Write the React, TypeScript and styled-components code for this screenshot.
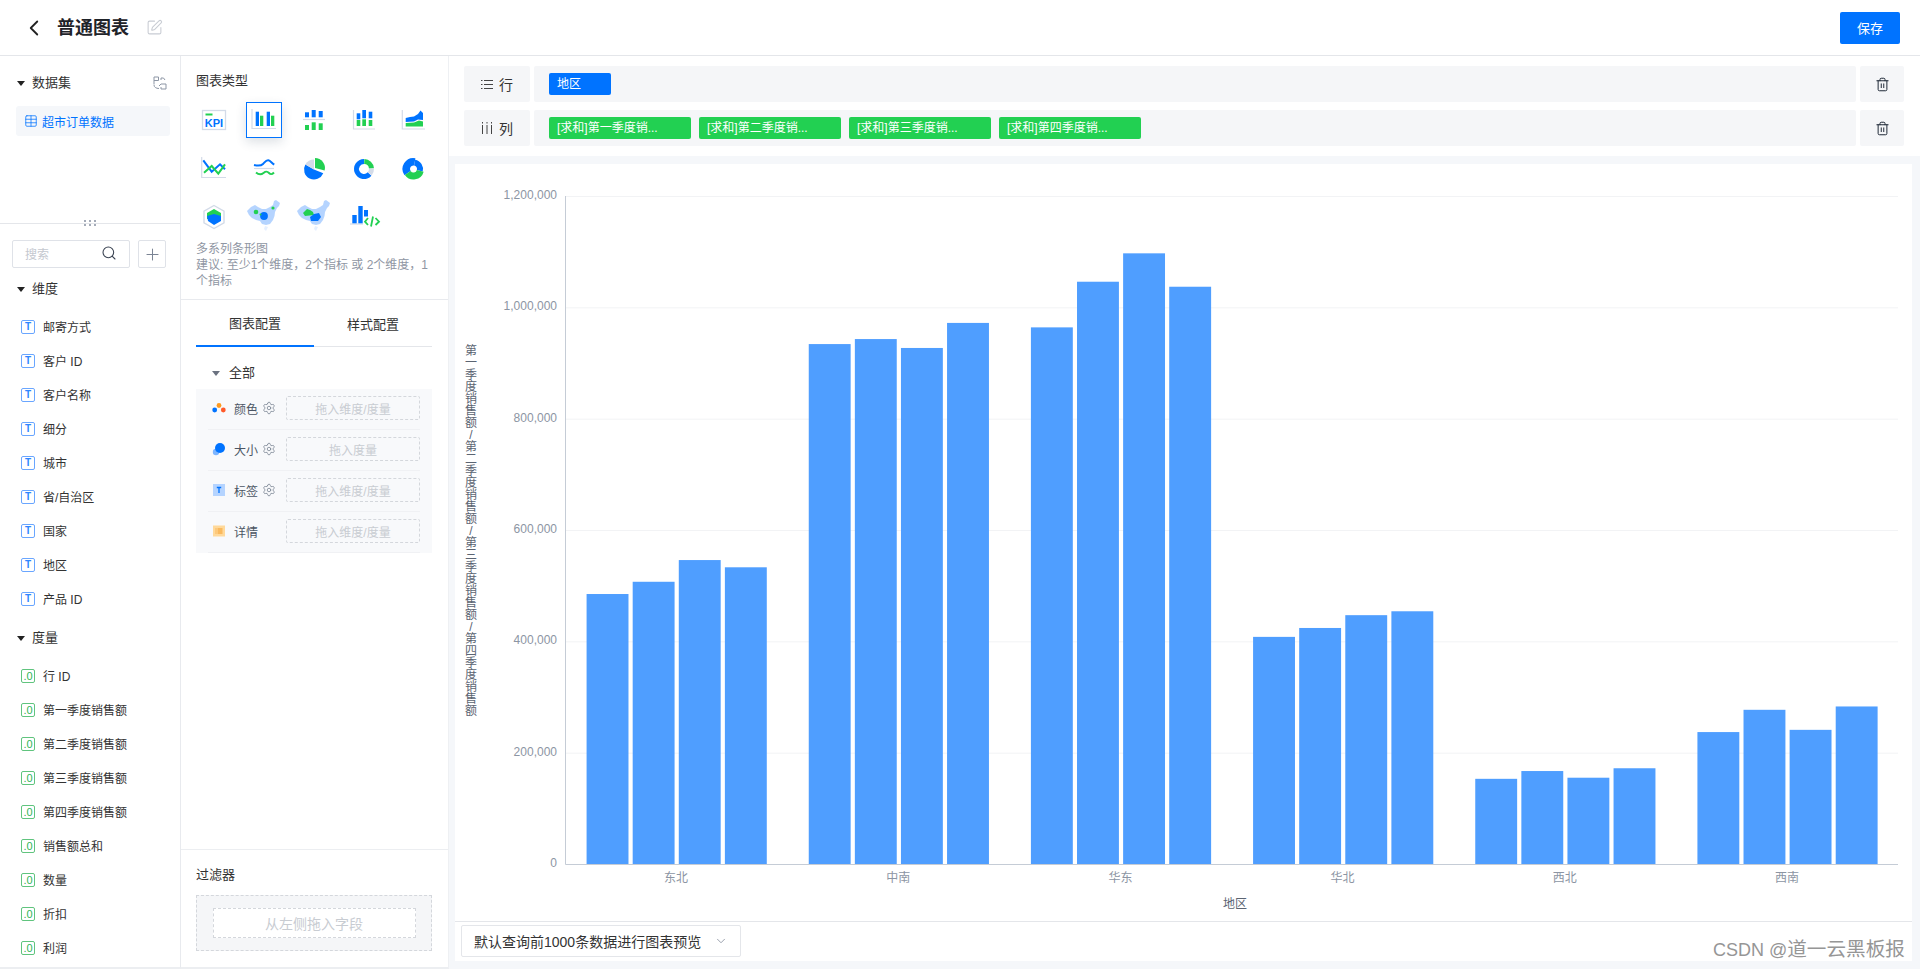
import React from "react";
import styled, { createGlobalStyle } from "styled-components";
import { ChevronDown, ChevronLeft, Plus, Search, Settings, SquarePen, Table, Trash2 } from "lucide-react";

const FONT = `"Liberation Sans", "Noto Sans CJK SC", sans-serif`;
const BLUE = "#0073ff";
const GREEN = "#22d052";
const LINE = "#d3dbe8";

const Global = createGlobalStyle`
  html, body { margin: 0; height: 100%; overflow: hidden; background: #fff; }
  body { font-family: ${FONT}; color: #333; }
  * { box-sizing: border-box; }
`;

const Page = styled.div`
  position: relative;
  width: 1920px;
  height: 969px;
  display: flex;
  flex-direction: column;
  overflow: hidden;
`;
const Header = styled.header`
  height: 56px;
  flex: none;
  display: flex;
  align-items: center;
  padding: 0 20px 0 21px;
  border-bottom: 1px solid #e4e6ea;
`;
const BackIcon = styled(ChevronLeft)`
  color: #222;
  margin-right: 10px;
`;
const Title = styled.h1`
  margin: 1px 17px 0 0;
  font-size: 18px;
  line-height: 24px;
  font-weight: 700;
  color: #1f2329;
`;
const EditIcon = styled(SquarePen)`
  color: #c8ccd3;
`;
const SaveButton = styled.button`
  margin-left: auto;
  width: 60px;
  height: 32px;
  border: 0;
  border-radius: 2px;
  background: ${BLUE};
  color: #fff;
  font: 13px ${FONT};
`;
const Body = styled.div`
  flex: 1;
  min-height: 0;
  display: flex;
`;
const LeftPanel = styled.aside`
  width: 181px;
  flex: none;
  display: flex;
  flex-direction: column;
  border-right: 1px solid #e8eaee;
  border-bottom: 2px solid #eceef1;
`;
const DatasetArea = styled.section`
  height: 168px;
  flex: none;
  padding: 19px 10px 0 17px;
  border-bottom: 1px solid #e4e6ea;
  position: relative;
`;
const Section = styled.div`
  display: flex;
  align-items: center;
  height: 16px;
  font-size: 13px;
  line-height: 16px;
  color: #333;
`;
const Caret = styled.i<{ $gray?: boolean }>`
  width: 0;
  height: 0;
  flex: none;
  margin-right: 7px;
  border-style: solid;
  border-width: 5px 4px 0;
  border-color: ${(p) => (p.$gray ? "#6b7280" : "#222")} transparent transparent;
`;
const SwapIcon = styled.svg`
  margin-left: auto;
  margin-right: 3px;
  width: 14px;
  height: 14px;
`;
const DatasetItem = styled.div`
  margin: 15px 0 0 -1px;
  height: 30px;
  border-radius: 3px;
  background: #f5f7fa;
  color: ${BLUE};
  font-size: 12px;
  display: flex;
  align-items: center;
  gap: 4px;
  padding-left: 8px;
`;
const Grip = styled.div`
  position: absolute;
  left: 84px;
  bottom: -3px;
  width: 12px;
  display: grid;
  grid-template-columns: repeat(3, 2px);
  gap: 2px 3px;
  & > b {
    width: 2px;
    height: 2px;
    background: #a4abb8;
  }
`;
const FieldsArea = styled.div`
  flex: 1;
  padding: 16px 14px 0 17px;
`;
const SearchRow = styled.div`
  display: flex;
  gap: 8px;
  margin: 0 0 0 -5px;
`;
const SearchBox = styled.div`
  width: 118px;
  height: 28px;
  border: 1px solid #dfe2e8;
  border-radius: 2px;
  display: flex;
  align-items: center;
  justify-content: space-between;
  padding: 0 12px 2px 12px;
  font-size: 12px;
  color: #c4c8cf;
`;
const AddBox = styled.div`
  width: 28px;
  height: 28px;
  border: 1px solid #dfe2e8;
  border-radius: 2px;
  display: flex;
  align-items: center;
  justify-content: center;
  color: #7b8494;
`;
const FieldHead = styled(Section)<{ $top: number }>`
  margin-top: ${(p) => p.$top}px;
  margin-bottom: 13px;
`;
const FieldRow = styled.div`
  height: 34px;
  display: flex;
  align-items: center;
  gap: 8px;
  margin-left: 4px;
  font-size: 12px;
  color: #333;
  white-space: nowrap;
`;
const FieldName = styled.span`
  margin-top: -2px;
`;
const FieldBadge = styled.span<{ $kind: "t" | "n" }>`
  width: 14px;
  height: 14px;
  flex: none;
  border: 1px solid ${(p) => (p.$kind === "t" ? "#6aa6ff" : "#60c47e")};
  border-radius: 2px;
  display: flex;
  align-items: center;
  justify-content: center;
  color: ${(p) => (p.$kind === "t" ? "#2f86ff" : "#2fb55a")};
  font-size: ${(p) => (p.$kind === "t" ? "10px" : "11px")};
  font-weight: ${(p) => (p.$kind === "t" ? 700 : 400)};
  line-height: 12px;
`;
const MidPanel = styled.aside`
  width: 268px;
  flex: none;
  display: flex;
  flex-direction: column;
  border-right: 1px solid #eef0f3;
  border-bottom: 2px solid #eceef1;
`;
const TypesArea = styled.section`
  height: 244px;
  flex: none;
  padding: 17px 16px 0 15px;
  border-bottom: 1px solid #e8eaee;
`;
const PlainTitle = styled.div`
  font-size: 13px;
  line-height: 16px;
  color: #333;
`;
const TypeGrid = styled.div`
  margin: 7px 0 0 -7px;
  display: grid;
  grid-template-columns: repeat(5, 50px);
  grid-auto-rows: 48.5px;
`;
const TypeCell = styled.div<{ $active?: boolean }>`
  width: 36px;
  height: 36px;
  margin: 6px 0 0 0;
  justify-self: center;
  display: flex;
  align-items: center;
  justify-content: center;
  ${(p) => (p.$active ? `outline: 1px solid ${BLUE}; outline-offset: -1px; box-shadow: 0 4px 10px rgba(40, 60, 90, 0.16);` : "")}
  & > svg { overflow: visible; flex: none; }
`;
const Description = styled.p`
  margin: -1px 0 0;
  width: 236px;
  font-size: 12px;
  line-height: 16px;
  color: #8f96a3;
`;
const ConfigArea = styled.section`
  flex: 1;
  padding: 1px 16px 0 15px;
`;
const Tabs = styled.div`
  display: flex;
  height: 46px;
  border-bottom: 1px solid #e4e6ea;
`;
const Tab = styled.div<{ $active?: boolean }>`
  width: 118px;
  height: 46px;
  display: flex;
  align-items: center;
  justify-content: center;
  padding-bottom: 2px;
  font-size: 13px;
  color: #333;
  ${(p) => (p.$active ? `border-bottom: 2px solid ${BLUE};` : "")}
`;
const AllRow = styled(Section)`
  margin: 18px 0 8px;
  padding-left: 16px;
  gap: 2px;
`;
const Slots = styled.div`
  background: #f8f9fb;
  padding: 0 12px;
  height: 164px;
`;
const Slot = styled.div`
  height: 41px;
  display: flex;
  align-items: center;
  padding-bottom: 2px;
  border-bottom: 1px solid #f0f1f4;
  font-size: 12px;
  color: #4b5563;
`;
const SlotIcon = styled.svg`
  width: 14px;
  height: 14px;
  flex: none;
  margin-right: 8px;
  margin-left: 4px;
`;
const SlotLabel = styled.span`
  width: 28px;
  flex: none;
`;
const GearSpace = styled.span`
  width: 14px;
  flex: none;
  margin-right: 10px;
  display: flex;
  color: #7d8796;
`;
const DropHint = styled.div`
  width: 134px;
  height: 24px;
  border: 1px dashed #d4d7dc;
  border-radius: 2px;
  display: flex;
  align-items: center;
  justify-content: center;
  font-size: 12px;
  color: #c8ccd2;
`;
const FilterArea = styled.section`
  height: 118px;
  flex: none;
  padding: 17px 16px 0 15px;
  border-top: 1px solid #eceef1;
`;
const FilterBox = styled.div`
  margin-top: 12px;
  height: 56px;
  border: 1px dashed #d4d7dc;
  background: #f5f6f8;
  display: flex;
  align-items: center;
  justify-content: center;
`;
const FilterInner = styled.div`
  width: 203px;
  height: 30px;
  background: #fff;
  border: 1px dashed #d4d7dc;
  display: flex;
  align-items: center;
  justify-content: center;
  font-size: 14px;
  color: #c8ccd2;
`;
const Main = styled.main`
  flex: 1;
  min-width: 0;
  display: flex;
  flex-direction: column;
  background: #f5f7fa;
`;
const Shelf = styled.div`
  height: 100px;
  flex: none;
  background: #fff;
  padding: 10px 16px 0 15px;
  display: flex;
  flex-direction: column;
  gap: 8px;
`;
const ShelfRow = styled.div`
  height: 36px;
  display: flex;
  gap: 4px;
`;
const ShelfLabel = styled.div`
  width: 66px;
  flex: none;
  border-radius: 2px;
  background: #f5f6f8;
  display: flex;
  align-items: center;
  justify-content: center;
  gap: 6px;
  font-size: 14px;
  color: #333;
`;
const ShelfDrop = styled.div`
  flex: 1;
  border-radius: 2px;
  background: #f5f6f8;
  display: flex;
  align-items: center;
  gap: 8px;
  padding-left: 15px;
`;
const ShelfTrash = styled.div`
  width: 44px;
  flex: none;
  border-radius: 2px;
  background: #f5f6f8;
  display: flex;
  align-items: center;
  justify-content: center;
  color: #1f2937;
`;
const Chip = styled.div<{ $green?: boolean }>`
  height: 22px;
  width: ${(p) => (p.$green ? "142px" : "62px")};
  border-radius: 2px;
  padding-left: 8px;
  background: ${(p) => (p.$green ? GREEN : BLUE)};
  color: #fff;
  font-size: 12px;
  line-height: 22px;
  white-space: nowrap;
`;
const ChartCard = styled.section`
  flex: 1;
  min-height: 0;
  margin: 8px 8px 8px 6px;
  background: #fff;
  display: flex;
  flex-direction: column;
`;
const ChartSvg = styled.svg`
  display: block;
  width: 1457px;
  height: 757px;
  flex: none;
`;
const Footer = styled.div`
  flex: 1;
  border-top: 1px solid #e4e6ea;
  padding: 3px 0 0 6px;
`;
const PreviewSelect = styled.div`
  width: 280px;
  height: 32px;
  border: 1px solid #e4e6ea;
  border-radius: 2px;
  display: flex;
  align-items: center;
  justify-content: space-between;
  padding: 0 12px;
  font-size: 14px;
  color: #333;
`;
const Chevron = styled(ChevronDown)`
  color: #8b93a1;
`;
const Watermark = styled.div`
  position: absolute;
  left: 1713px;
  top: 936px;
  font-size: 18px;
  line-height: 26px;
  color: #969696;
  white-space: nowrap;
`;
const WatermarkCjk = styled.span`
  font-size: 19.6px;
`;

/* ---- chart-type drawings ---- */
const polar = (cx: number, cy: number, r: number, a: number) => {
  const t = ((a - 90) * Math.PI) / 180;
  return `${(cx + r * Math.cos(t)).toFixed(2)} ${(cy + r * Math.sin(t)).toFixed(2)}`;
};
const sector = (cx: number, cy: number, r: number, a0: number, a1: number, inner = 0) => {
  const large = a1 - a0 > 180 ? 1 : 0;
  if (!inner) return `M${cx} ${cy}L${polar(cx, cy, r, a0)}A${r} ${r} 0 ${large} 1 ${polar(cx, cy, r, a1)}Z`;
  return `M${polar(cx, cy, r, a0)}A${r} ${r} 0 ${large} 1 ${polar(cx, cy, r, a1)}L${polar(cx, cy, inner, a1)}A${inner} ${inner} 0 ${large} 0 ${polar(cx, cy, inner, a0)}Z`;
};
const CHINA = "M1 12L5 8L9 6L12 8L16 10L20 10L24 8L27 6L28 2L30 1L34 4L33 7L31 9L29 13L28.5 17L27 21L24 25L20 26L16 25L14 22L10 21L6 19L3 16Z";

const Glyph: React.FC<{ children: React.ReactNode }> = ({ children }) => (
  <svg width="36" height="36" viewBox="0 0 36 36">{children}</svg>
);
const Axes: React.FC<{ x?: number; y?: number; end?: number; top?: number }> = ({ x = 6, y = 26.5, end = 30, top = 7 }) => (
  <path d={`M${x} ${top}V${y}H${end}`} fill="none" stroke={LINE} strokeWidth="1.2" />
);

const typeIcons: React.ReactNode[] = [
  <Glyph key="kpi">
    <rect x="6.5" y="8.5" width="23" height="19" fill="none" stroke={LINE} strokeWidth="1.3" />
    <rect x="9.5" y="11.5" width="7" height="2" fill={GREEN} />
    <text x="18" y="25" textAnchor="middle" fontFamily={FONT} fontWeight="700" fontSize="11" fill={BLUE}>KPI</text>
  </Glyph>,
  <Glyph key="bars">
    <Axes />
    <rect x="9.7" y="9.7" width="3.3" height="14.3" fill={BLUE} />
    <rect x="14" y="13.7" width="3.3" height="10.3" fill={GREEN} />
    <rect x="20.7" y="9.7" width="3.3" height="14.3" fill={BLUE} />
    <rect x="25" y="13.7" width="3.3" height="10.3" fill={GREEN} />
  </Glyph>,
  <Glyph key="mirror">
    <rect x="9" y="10.3" width="4" height="5" fill={BLUE} />
    <rect x="15.7" y="8" width="4" height="7.3" fill={BLUE} />
    <rect x="22.7" y="9" width="4" height="6.3" fill={BLUE} />
    <path d="M7 17.5H29" stroke={LINE} strokeWidth="1.2" />
    <rect x="9" y="23" width="4" height="5" fill={GREEN} />
    <rect x="15.7" y="20.3" width="4" height="7.7" fill={GREEN} />
    <rect x="22.7" y="21.3" width="4" height="6.7" fill={GREEN} />
  </Glyph>,
  <Glyph key="stack">
    <Axes x={7.5} y={27} end={29} top={8} />
    <rect x="10.7" y="11.3" width="3.6" height="6" fill={BLUE} />
    <rect x="10.7" y="18" width="3.6" height="6" fill={GREEN} />
    <rect x="16.3" y="8" width="3.7" height="8.3" fill={BLUE} />
    <rect x="16.3" y="17.3" width="3.7" height="6.7" fill={GREEN} />
    <rect x="22.7" y="9.7" width="3.6" height="6.6" fill={BLUE} />
    <rect x="22.7" y="18" width="3.6" height="6" fill={GREEN} />
  </Glyph>,
  <Glyph key="area">
    <Axes x={6.3} y={27} end={29} top={8} />
    <path d="M9.7 16L14 15L18 14.5L22 12L24.5 8.5L27 11V18L22 17.5L18 19.5L9.7 20Z" fill={BLUE} />
    <path d="M9.7 21L18 20.5L23 18.5L27 19.5V24.5H9.7Z" fill={GREEN} />
  </Glyph>,
  <Glyph key="line">
    <Axes x={5.7} y={26.5} end={30} top={6} />
    <path d="M7.3 9.3L15.7 20.7L24 13.3L29 18.3" fill="none" stroke={BLUE} strokeWidth="2" />
    <path d="M8 21.7L15.7 15L22.3 22.7L29 13.3" fill="none" stroke={GREEN} strokeWidth="2" />
  </Glyph>,
  <Glyph key="dual">
    <path d="M8 14C12 15 15 15 17 13S20 9 22.3 9.3S26 12.5 28.3 13.5" fill="none" stroke={BLUE} strokeWidth="2" />
    <path d="M8 17.5H28" stroke={LINE} strokeWidth="1.2" />
    <path d="M10 21.5C13 24 15 24 17.5 22S21 20 23 22S26 23.5 28 21.5" fill="none" stroke={GREEN} strokeWidth="2" />
  </Glyph>,
  <Glyph key="pie">
    <path d={sector(18, 18.5, 10, 112, 300)} fill={BLUE} />
    <path d={sector(18, 18.5, 10, 300, 360)} fill={LINE} />
    <path d={sector(19, 17, 10, 0, 105)} fill={GREEN} />
  </Glyph>,
  <Glyph key="donut">
    <path d={sector(18, 18, 10, 132, 360, 5)} fill={BLUE} />
    <path d={sector(18, 18, 10, 2, 85, 5)} fill={GREEN} />
    <path d={sector(18, 18, 10, 87, 130, 5)} fill={LINE} />
  </Glyph>,
  <Glyph key="rose">
    <path d={sector(17.5, 18, 11, 235, 370, 3.5)} fill={BLUE} />
    <path d={sector(17.5, 18, 9.5, 10, 105, 3.5)} fill={BLUE} />
    <path d={sector(17.5, 18, 10.5, 105, 235, 3.5)} fill={GREEN} />
  </Glyph>,
  <Glyph key="radar">
    <path d="M18 6.5L28 12.2V23.8L18 29.5L8 23.8V12.2Z" fill="#fff" stroke={LINE} strokeWidth="1.4" />
    <path d="M18 10L25 14V20H11V14Z" fill={GREEN} />
    <path d="M11 17L18 15L25 17V22L18 26L12 22Z" fill={BLUE} />
  </Glyph>,
  <Glyph key="map1">
    <path d={CHINA} fill="#b5d4ff" />
    <circle cx="10" cy="13" r="2.3" fill={GREEN} />
    <circle cx="27" cy="9" r="1.6" fill={GREEN} />
    <circle cx="18" cy="17" r="3.9" fill={BLUE} />
    <circle cx="14.5" cy="15.5" r="1" fill={GREEN} />
    <path d="M19 27L22 28L20 32L18 30Z" fill="#e6f0ff" />
  </Glyph>,
  <Glyph key="map2">
    <path d={CHINA} fill="#b5d4ff" />
    <path d="M7 14L11 10L14 11L17 13L18 16L9 17Z" fill={GREEN} />
    <path d="M14 18L18 15L23 14L25 18L22 22L15 22Z" fill={BLUE} />
    <path d="M19 27L22 28L20 32L18 30Z" fill="#e6f0ff" />
  </Glyph>,
  <Glyph key="code">
    <path d="M4 25H17" stroke={LINE} strokeWidth="1.2" />
    <rect x="6.3" y="16" width="4.4" height="8.3" fill={BLUE} />
    <rect x="12.3" y="7" width="4.4" height="17.3" fill={BLUE} />
    <rect x="18" y="11" width="4" height="6.5" fill={BLUE} />
    <path d="M22 19L19 22.7L22 26M27 17.5L25 27.5M29.5 19L33 22.7L29.5 26" fill="none" stroke={GREEN} strokeWidth="1.8" />
  </Glyph>,
];

/* ---- data ---- */
const dims = ["邮寄方式", "客户 ID", "客户名称", "细分", "城市", "省/自治区", "国家", "地区", "产品 ID"];
const measures = ["行 ID", "第一季度销售额", "第二季度销售额", "第三季度销售额", "第四季度销售额", "销售额总和", "数量", "折扣", "利润"];
const chips = ["[求和]第一季度销...", "[求和]第二季度销...", "[求和]第三季度销...", "[求和]第四季度销..."];
const regions: { name: string; values: number[] }[] = [
  { name: "东北", values: [485000, 507000, 546000, 533000] },
  { name: "中南", values: [934000, 943000, 927000, 972000] },
  { name: "华东", values: [964000, 1046000, 1097000, 1037000] },
  { name: "华北", values: [408000, 424000, 447000, 454000] },
  { name: "西北", values: [153000, 167000, 155000, 172000] },
  { name: "西南", values: [237000, 277000, 241000, 283000] },
];
const yTitle = "第一季度销售额/第二季度销售额/第三季度销售额/第四季度销售额";

const PLOT = { left: 110, right: 1443, top: 32, bottom: 700 };
const catW = (PLOT.right - PLOT.left) / 6;
const valueY = (v: number) => PLOT.bottom - (v / 1200000) * (PLOT.bottom - PLOT.top);

const Chart: React.FC = () => (
  <ChartSvg viewBox="0 0 1457 757">
    {[0, 1, 2, 3, 4, 5, 6].map((i) => {
      const v = i * 200000;
      const y = valueY(v) + 0.5;
      return (
        <g key={i}>
          {i > 0 && <line x1={PLOT.left} x2={PLOT.right} y1={y} y2={y} stroke="#f2f3f5" />}
          <text x={102} y={y + 2.5} textAnchor="end" fontFamily={FONT} fontSize="12" fill="#8c95a3">
            {v.toLocaleString("en-US")}
          </text>
        </g>
      );
    })}
    {regions.map((r, i) => {
      const cx = PLOT.left + catW * (i + 0.5);
      return (
        <g key={r.name}>
          {r.values.map((v, j) => (
            <rect key={j} x={cx - 89.5 + j * 46.1} y={valueY(v)} width={41.9} height={PLOT.bottom - valueY(v)} fill="#4f9eff" />
          ))}
          <text x={cx} y={718} textAnchor="middle" fontFamily={FONT} fontSize="12" fill="#8c95a3">{r.name}</text>
        </g>
      );
    })}
    <path d={`M${PLOT.left + 0.5} ${PLOT.top}V${PLOT.bottom + 0.5}H${PLOT.right}`} fill="none" stroke="#c5ccd6" />
    <text x={780} y={744} textAnchor="middle" fontFamily={FONT} fontSize="12" fill="#5b6472">地区</text>
    {Array.from(yTitle).map((ch, i) => (
      <text key={i} x={16} y={191 + i * 12} textAnchor="middle" fontFamily={FONT} fontSize="12" fill="#5b6472">{ch}</text>
    ))}
  </ChartSvg>
);

const ListGlyph: React.FC = () => (
  <svg width="12" height="11" viewBox="0 0 12 11">
    <path d="M0 1.5H1.5M3 1.5H12M0 5.5H1.5M3 5.5H12M0 9.5H1.5M3 9.5H12" stroke="#444" strokeWidth="1" fill="none" />
  </svg>
);
const ColumnGlyph: React.FC = () => (
  <svg width="12" height="12" viewBox="0 0 12 12">
    <path d="M1.5 0V1.5M1.5 3V12M6 0V1.5M6 3V12M10.5 0V1.5M10.5 3V12" stroke="#444" strokeWidth="1" fill="none" />
  </svg>
);

const slotDrawings: Record<string, React.ReactNode> = {
  颜色: (
    <SlotIcon viewBox="0 0 14 14">
      <circle cx="7" cy="4.5" r="2.4" fill="#ff9a1f" />
      <circle cx="2.7" cy="9" r="2.4" fill={BLUE} />
      <circle cx="11.3" cy="9" r="2.4" fill="#ff5a2a" />
    </SlotIcon>
  ),
  大小: (
    <SlotIcon viewBox="0 0 14 14">
      <circle cx="4" cy="10" r="3.2" fill="#7db5ff" />
      <circle cx="8" cy="6" r="5" fill={BLUE} />
    </SlotIcon>
  ),
  标签: (
    <SlotIcon viewBox="0 0 14 14">
      <rect x="1" y="1" width="12" height="12" fill="#b5d4ff" />
      <path d="M4.8 4.5H9.2M7 4.5V10" stroke={BLUE} strokeWidth="1.3" fill="none" />
    </SlotIcon>
  ),
  详情: (
    <SlotIcon viewBox="0 0 14 14">
      <rect x="1" y="1.5" width="12" height="11" fill="#ffd99a" />
      <path d="M3.5 5H4.5M5.5 5H10.5M3.5 7H4.5M5.5 7H10.5M3.5 9H4.5M5.5 9H10.5" stroke="#f59a23" strokeWidth="1" fill="none" />
    </SlotIcon>
  ),
};
const slots = [
  { name: "颜色", hint: "拖入维度/度量", gear: true },
  { name: "大小", hint: "拖入度量", gear: true },
  { name: "标签", hint: "拖入维度/度量", gear: true },
  { name: "详情", hint: "拖入维度/度量", gear: false },
];

export default function App() {
  return (
    <Page>
      <Global />
      <Header>
        <BackIcon size={26} strokeWidth={1.7} />
        <Title>普通图表</Title>
        <EditIcon size={17} strokeWidth={1.5} />
        <SaveButton>保存</SaveButton>
      </Header>
      <Body>
        <LeftPanel>
          <DatasetArea>
            <Section>
              <Caret />
              数据集
              <SwapIcon viewBox="0 0 14 14">
                <path d="M5.5 1H1V8.5M1 4.5H5.5V1M8 4V2H10.5L12 4M6 10L8 8H13V13H8V11M1 9C1 11 3 12.5 6 12.5" fill="none" stroke="#8d96a5" strokeWidth="1" />
              </SwapIcon>
            </Section>
            <DatasetItem>
              <Table size={14} strokeWidth={1.3} />
              超市订单数据
            </DatasetItem>
            <Grip>
              {[0, 1, 2, 3, 4, 5].map((i) => <b key={i} />)}
            </Grip>
          </DatasetArea>
          <FieldsArea>
            <SearchRow>
              <SearchBox>
                搜索
                <Search size={16} color="#3a4352" strokeWidth={1.6} />
              </SearchBox>
              <AddBox><Plus size={19} strokeWidth={1.3} /></AddBox>
            </SearchRow>
            <FieldHead $top={13}><Caret />维度</FieldHead>
            {dims.map((d) => (
              <FieldRow key={d}><FieldBadge $kind="t">T</FieldBadge><FieldName>{d}</FieldName></FieldRow>
            ))}
            <FieldHead $top={14}><Caret />度量</FieldHead>
            {measures.map((d) => (
              <FieldRow key={d}><FieldBadge $kind="n">.0</FieldBadge><FieldName>{d}</FieldName></FieldRow>
            ))}
          </FieldsArea>
        </LeftPanel>
        <MidPanel>
          <TypesArea>
            <PlainTitle>图表类型</PlainTitle>
            <TypeGrid>
              {typeIcons.map((icon, i) => (
                <TypeCell key={i} $active={i === 1}>{icon}</TypeCell>
              ))}
            </TypeGrid>
            <Description>
              多系列条形图
              <br />
              建议: 至少1个维度，2个指标 或 2个维度，1个指标
            </Description>
          </TypesArea>
          <ConfigArea>
            <Tabs>
              <Tab $active>图表配置</Tab>
              <Tab>样式配置</Tab>
            </Tabs>
            <AllRow><Caret $gray />全部</AllRow>
            <Slots>
              {slots.map((s) => (
                <Slot key={s.name}>
                  {slotDrawings[s.name]}
                  <SlotLabel>{s.name}</SlotLabel>
                  <GearSpace>{s.gear && <Settings size={14} strokeWidth={1.4} />}</GearSpace>
                  <DropHint>{s.hint}</DropHint>
                </Slot>
              ))}
            </Slots>
          </ConfigArea>
          <FilterArea>
            <PlainTitle>过滤器</PlainTitle>
            <FilterBox><FilterInner>从左侧拖入字段</FilterInner></FilterBox>
          </FilterArea>
        </MidPanel>
        <Main>
          <Shelf>
            <ShelfRow>
              <ShelfLabel><ListGlyph />行</ShelfLabel>
              <ShelfDrop><Chip>地区</Chip></ShelfDrop>
              <ShelfTrash><Trash2 size={15} strokeWidth={1.6} /></ShelfTrash>
            </ShelfRow>
            <ShelfRow>
              <ShelfLabel><ColumnGlyph />列</ShelfLabel>
              <ShelfDrop>
                {chips.map((c) => (
                  <Chip key={c} $green>{c}</Chip>
                ))}
              </ShelfDrop>
              <ShelfTrash><Trash2 size={15} strokeWidth={1.6} /></ShelfTrash>
            </ShelfRow>
          </Shelf>
          <ChartCard>
            <Chart />
            <Footer>
              <PreviewSelect>
                默认查询前1000条数据进行图表预览
                <Chevron size={14} strokeWidth={1.5} />
              </PreviewSelect>
            </Footer>
          </ChartCard>
        </Main>
      </Body>
      <Watermark>CSDN @<WatermarkCjk>道一云黑板报</WatermarkCjk></Watermark>
    </Page>
  );
}
